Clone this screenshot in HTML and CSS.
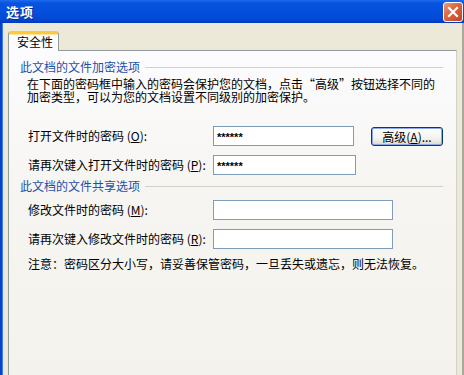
FILE: index.html
```html
<!DOCTYPE html>
<html lang="zh-CN">
<head>
<meta charset="utf-8">
<link rel="stylesheet" href="styles.css">
</head>
<body>
<div class="window">
  <div class="titlebar">
    <span class="title">选项</span>
    <span class="close"><svg width="12" height="12" viewBox="0 0 12 12"><path d="M2 2 L10 10 M10 2 L2 10" stroke="#fff" stroke-width="2.2" stroke-linecap="square"/></svg></span>
  </div>
  <div class="frame">
    <div class="edge"></div>
    <div class="client">
      <div class="tabs"><div class="tab">安全性</div></div>
      <div class="panel">
        <div class="group-header"><span>此文档的文件加密选项</span><span class="rule"></span></div>
        <p class="desc">在下面的密码框中输入的密码会保护您的文档，点击“高级”按钮选择不同的<br>加密类型，可以为您的文档设置不同级别的加密保护。</p>
        <div class="row row-first">
          <span class="label">打开文件时的密码 (<u>O</u>):</span>
          <div class="field short">******</div>
          <div class="btn">高级(<u>A</u>)...</div>
        </div>
        <div class="row">
          <span class="label">请再次键入打开文件时的密码 (<u>P</u>):</span>
          <div class="field short">******</div>
        </div>
        <div class="group-header second"><span>此文档的文件共享选项</span><span class="rule"></span></div>
        <div class="row row-third">
          <span class="label">修改文件时的密码 (<u>M</u>):</span>
          <div class="field long"></div>
        </div>
        <div class="row">
          <span class="label">请再次键入修改文件时的密码 (<u>R</u>):</span>
          <div class="field long"></div>
        </div>
        <p class="note">注意：密码区分大小写，请妥善保管密码，一旦丢失或遗忘，则无法恢复。</p>
      </div>
    </div>
    <div class="redge"></div>
  </div>
</div>
</body>
</html>
```
FILE: styles.css
```css
html, body {
  margin: 0;
  padding: 0;
}
body {
  width: 464px;
  height: 375px;
  overflow: hidden;
  font-family: "Noto Sans CJK SC", "Noto Sans", sans-serif;
  font-size: 12px;
  color: #000;
}
.window {
  width: 464px;
  height: 375px;
  display: flex;
  flex-direction: column;
  background: #ece9d8;
  overflow: hidden;
}
.titlebar {
  height: 23px;
  flex: none;
  display: flex;
  align-items: center;
  justify-content: space-between;
  padding-left: 6px;
  background: linear-gradient(#1f6cf0 0, #0754e0 3px, #044fdc 50%, #0348d4 85%, #0038bc 100%);
}
.title {
  color: #fff;
  font-weight: bold;
  font-size: 13px;
  letter-spacing: 1px;
  line-height: 14px;
  text-shadow: 1px 1px #0a2a8a;
}
.close {
  width: 20px;
  height: 20px;
  margin-right: 1px;
  box-sizing: border-box;
  border: 1px solid #fff;
  border-radius: 3px;
  background: linear-gradient(135deg, #ec9a7a 0%, #dc6a45 40%, #c4421f 100%);
  display: flex;
  align-items: center;
  justify-content: center;
}
.frame {
  flex: 1;
  display: flex;
}
.edge {
  width: 3px;
  flex: none;
  background: linear-gradient(90deg, #0a3fc8 0 2px, #3c7ef0 2px 3px);
}
.client {
  flex: 1;
  padding: 8px 0 0 5px;
  display: flex;
  flex-direction: column;
}
.redge {
  width: 2px;
  flex: none;
  background: #a9a89c;
}
.tabs {
  height: 19px;
  display: flex;
}
.tab {
  position: relative;
  z-index: 1;
  width: 51px;
  height: 20px;
  box-sizing: border-box;
  border: 1px solid #919b9c;
  border-top: 3px solid #ffc83c;
  border-bottom: none;
  border-radius: 3px 3px 0 0;
  box-shadow: inset 0 1px 0 #ffe7a2;
  background: #fcfcfe;
  padding-left: 8px;
  line-height: 16px;
}
.panel {
  width: 449px;
  flex: 1;
  min-height: 340px;
  box-sizing: border-box;
  border: 1px solid #919b9c;
  border-right-color: #d2d1c6;
  background: linear-gradient(#fcfcfe, #f6f5f1 140px, #f3f2ec);
  padding: 0 13px 0 11px;
}
.group-header {
  display: flex;
  align-items: center;
  height: 12px;
  line-height: 12px;
  margin-top: 10px;
  color: #1f4fa6;
}
.group-header.second {
  margin-top: 5px;
}
.rule {
  flex: 1;
  height: 0;
  border-top: 1px solid #d3d2c6;
  margin-left: 5px;
}
.desc {
  margin: 4px 0 0 7px;
  line-height: 13px;
}
.row {
  display: flex;
  align-items: center;
  height: 20px;
  margin: 9px 0 0 8px;
}
.row-first {
  margin-top: 23px;
}
.row-third {
  margin-top: 8px;
}
.label {
  width: 185px;
  flex: none;
  line-height: 12px;
}
.field {
  box-sizing: border-box;
  height: 20px;
  border: 1px solid #7f9db9;
  background: #fff;
  padding-left: 3px;
  font-family: "Liberation Sans", sans-serif;
  font-weight: bold;
  font-size: 11px;
  line-height: 21px;
}
.short {
  width: 143px;
}
.long {
  width: 180px;
}
.btn {
  margin-left: 17px;
  width: 73px;
  height: 19px;
  box-sizing: border-box;
  border: 1px solid #003c74;
  border-radius: 3px;
  box-shadow: inset 0 0 0 1px #8fa9e8;
  background: linear-gradient(#ffffff, #f3f3ef 60%, #dcd9cd);
  text-align: center;
  line-height: 17px;
}
.note {
  margin: 9px 0 0 8px;
  line-height: 12px;
}
```
